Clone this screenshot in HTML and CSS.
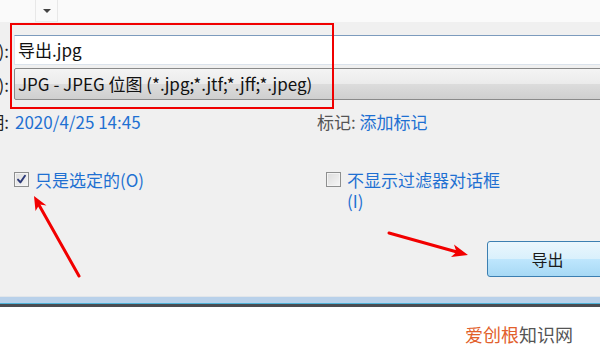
FILE: index.html
```html
<!DOCTYPE html>
<html lang="zh-CN">
<head>
<meta charset="utf-8">
<title>导出</title>
<link rel="stylesheet" href="styles.css">
</head>
<body>
<div class="screen">
  <div class="topbar">
    <div class="dropbtn"><span class="tri"></span></div>
  </div>
  <div class="dialog">
    <div class="field-row">
      <span class="lbl"><span>文件名(N):</span></span>
      <div class="textbox">导出.jpg</div>
    </div>
    <div class="field-row second">
      <span class="lbl"><span>保存类型(T):</span></span>
      <div class="combo">JPG - JPEG 位图 (*.jpg;*.jtf;*.jff;*.jpeg)</div>
    </div>
    <div class="meta-row">
      <div class="meta-left">
        <span class="lbl"><span>日期:</span></span>
        <span class="link date">2020/4/25 14:45</span>
      </div>
      <div class="meta-right">
        <span class="muted">标记:</span> <span class="link">添加标记</span>
      </div>
    </div>
    <div class="check-row">
      <label class="check check-left">
        <span class="box checked"><svg viewBox="0 0 15 15" width="15" height="15"><path d="M4 7.6 L6.4 10.4 L11 3.8" fill="none" stroke="#2c3a78" stroke-width="1.9" stroke-linecap="round" stroke-linejoin="round"/></svg></span>
        <span class="link">只是选定的(O)</span>
      </label>
      <label class="check check-right">
        <span class="box"></span>
        <span class="link">不显示过滤器对话框<br>(I)</span>
      </label>
    </div>
    <div class="btn-row">
      <button class="btn">导出</button>
    </div>
  </div>
  <div class="strip"></div>
  <div class="footer">
    <span class="wm"><span class="wm-a">爱创根</span>知识网</span>
  </div>

  <div class="redbox"></div>
  <svg class="arrows" viewBox="0 0 600 356" width="600" height="356">
    <line x1="79" y1="276" x2="39" y2="205" stroke="#f20000" stroke-width="3" stroke-linecap="round"/>
    <polygon points="34,196 46.5,205.5 39.5,204.5 35.5,211" fill="#f20000"/>
    <line x1="389" y1="233" x2="457" y2="252" stroke="#f20000" stroke-width="3" stroke-linecap="round"/>
    <polygon points="468,255 451,257 456.5,252 454,244.5" fill="#f20000"/>
  </svg>
</div>
</body>
</html>
```

FILE: styles.css
```css
* { box-sizing: border-box; }
html, body { margin: 0; padding: 0; }
body {
  width: 600px;
  height: 356px;
  overflow: hidden;
  background: #ffffff;
  font-family: "Noto Sans CJK SC", "Noto Sans", sans-serif;
  font-size: 17px;
}
.screen {
  position: relative;
  width: 600px;
  height: 356px;
  overflow: hidden;
}
.topbar {
  height: 22px;
  background: #fafafa;
  padding-left: 35px;
}
.dropbtn {
  width: 23px;
  height: 22px;
  border-left: 1px solid #e8e8e8;
  border-right: 1px solid #e8e8e8;
  border-bottom: 1px solid #ececec;
  display: flex;
  align-items: center;
  justify-content: center;
}
.tri {
  width: 0;
  height: 0;
  border-left: 4px solid transparent;
  border-right: 4px solid transparent;
  border-top: 4px solid #444;
  margin-left: 1px;
}
.dialog {
  background: #f0f0f0;
  height: 275px;
  padding-top: 13px;
  border-bottom: 1px solid #e2e6ea;
}
.field-row {
  display: flex;
  align-items: center;
  gap: 5px;
  height: 30px;
}
.field-row.second {
  margin-top: 3px;
  height: 32px;
}
.lbl {
  width: 9px;
  flex: none;
  display: flex;
  justify-content: flex-end;
  overflow: hidden;
  white-space: nowrap;
  color: #222;
}
.textbox {
  flex: none;
  width: 600px;
  height: 30px;
  background: #fff;
  border: 1px solid #dbe3ec;
  border-top-color: #7c9bbd;
  padding-left: 3px;
  line-height: 27px;
  font-size: 17px;
  color: #111;
}
.combo {
  flex: none;
  width: 600px;
  height: 32px;
  border: 1px solid #8a8a8a;
  border-radius: 2px;
  background: linear-gradient(#f4f4f4 0%, #ebebeb 50%, #dcdcdc 51%, #cfcfcf 100%);
  padding-left: 3px;
  line-height: 29px;
  font-size: 17px;
  color: #111;
}
.meta-row {
  display: flex;
  margin-top: 11px;
  line-height: 22px;
}
.meta-left {
  width: 317px;
  display: flex;
  gap: 6px;
}
.link { color: #1f70d2; }
.muted { color: #555; }
.check-row {
  display: flex;
  margin-top: 36px;
  line-height: 21px;
}
.check {
  display: flex;
  align-items: flex-start;
  gap: 6px;
}
.check-left {
  width: 326px;
  padding-left: 14px;
}
.box {
  width: 15px;
  height: 15px;
  margin-top: 3px;
  flex: none;
  border: 1px solid #8e8f8f;
  background: linear-gradient(135deg, #dcdcdc, #f6f6f6);
  box-shadow: inset 0 0 0 1px #f4f4f4;
  position: relative;
}
.box svg {
  position: absolute;
  left: -1px;
  top: -1px;
}
.btn-row {
  display: flex;
  justify-content: flex-end;
  margin-top: 30px;
  margin-right: -8px;
}
.btn {
  width: 121px;
  height: 36px;
  border: 1px solid #3c7fb1;
  border-radius: 3px;
  background: linear-gradient(#eaf6fd 0%, #d9f0fc 50%, #bee6fd 51%, #a7d9f5 100%);
  font-family: "Noto Sans CJK SC", sans-serif;
  font-size: 16px;
  color: #1a1a1a;
  padding: 0;
}
.strip {
  height: 7px;
  background: #b9d1ea;
  border-bottom: 1px solid #4fb3d8;
}
.strip + .footer {
  border-top: 3px solid #4a4d52;
}
.footer {
  height: 47px;
  background: #fff;
  display: flex;
  justify-content: flex-end;
  align-items: center;
  padding-right: 27px;
  padding-top: 9px;
}
.wm {
  font-size: 18px;
  color: #555;
  letter-spacing: 0;
}
.wm-a { color: #e2602b; }
.redbox {
  position: absolute;
  left: 10px;
  top: 23px;
  width: 324px;
  height: 86px;
  border: 2px solid #f00000;
}
.arrows {
  position: absolute;
  left: 0;
  top: 0;
  pointer-events: none;
}
```
